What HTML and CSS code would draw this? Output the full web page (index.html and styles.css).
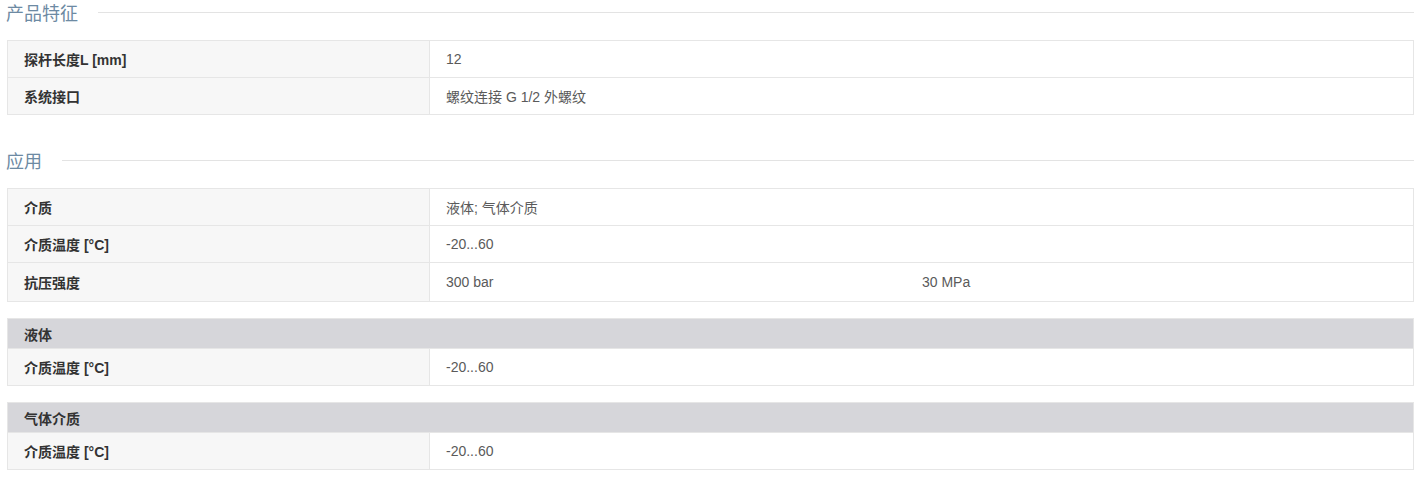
FILE: index.html
```html
<!DOCTYPE html>
<html lang="zh">
<head>
<meta charset="utf-8">
<title>产品特征</title>
<link rel="stylesheet" href="styles.css">
</head>
<body>
<div class="page">
  <h2 class="sec-title">产品特征</h2>
  <div class="spec">
    <div class="row"><div class="lbl">探杆长度L [mm]</div><div class="val">12</div></div>
    <div class="row"><div class="lbl">系统接口</div><div class="val">螺纹连接 G 1/2 外螺纹</div></div>
  </div>

  <h2 class="sec-title sec-gap">应用</h2>
  <div class="spec">
    <div class="row"><div class="lbl">介质</div><div class="val">液体; 气体介质</div></div>
    <div class="row"><div class="lbl">介质温度 [°C]</div><div class="val">-20...60</div></div>
    <div class="row row-tall"><div class="lbl">抗压强度</div><div class="val val-half">300 bar</div><div class="val">30 MPa</div></div>
  </div>

  <div class="spec spec-sub">
    <div class="head">液体</div>
    <div class="row"><div class="lbl">介质温度 [°C]</div><div class="val">-20...60</div></div>
  </div>

  <div class="spec spec-sub">
    <div class="head">气体介质</div>
    <div class="row"><div class="lbl">介质温度 [°C]</div><div class="val">-20...60</div></div>
  </div>
</div>
</body>
</html>
```

FILE: styles.css
```css
html, body {
  margin: 0;
  padding: 0;
  background: #ffffff;
}

body {
  font-family: "Liberation Sans", Arial, "Noto Sans CJK SC", sans-serif;
  font-size: 14px;
  color: #555555;
}

.page {
  padding: 0 3px 0 7px;
}

.sec-title {
  display: flex;
  align-items: center;
  margin: 0;
  height: 24px;
  font-family: "Noto Sans CJK SC", sans-serif;
  font-weight: normal;
  font-size: 18px;
  line-height: 24px;
  color: #6d8aa3;
  margin-left: -1px;
}

.sec-title::after {
  content: "";
  flex: 1;
  height: 1px;
  background: #e3e3e3;
  margin-left: 20px;
}

.sec-gap {
  margin-top: 33px;
}

.spec {
  margin-top: 16px;
  border: 1px solid #e6e6e6;
  border-bottom: none;
}

.spec-sub {
  margin-top: 16px;
}

.row {
  display: flex;
  height: 37px;
  border-bottom: 1px solid #e6e6e6;
  box-sizing: border-box;
}

.row-tall {
  height: 39px;
}

.lbl {
  box-sizing: border-box;
  width: 422px;
  flex: none;
  padding: 0 16px;
  display: flex;
  align-items: center;
  background: #f7f7f7;
  border-right: 1px solid #e6e6e6;
  font-weight: bold;
  color: #333333;
}

.val {
  flex: 1;
  padding: 0 16px;
  display: flex;
  align-items: center;
  color: #5a5a5a;
}

.val-half {
  flex: none;
  width: 444px;
}

.head {
  height: 29px;
  display: flex;
  align-items: center;
  padding: 0 16px;
  background: #d6d6da;
  font-weight: bold;
  color: #333333;
  border-bottom: 1px solid #e6e6e6;
}
```
